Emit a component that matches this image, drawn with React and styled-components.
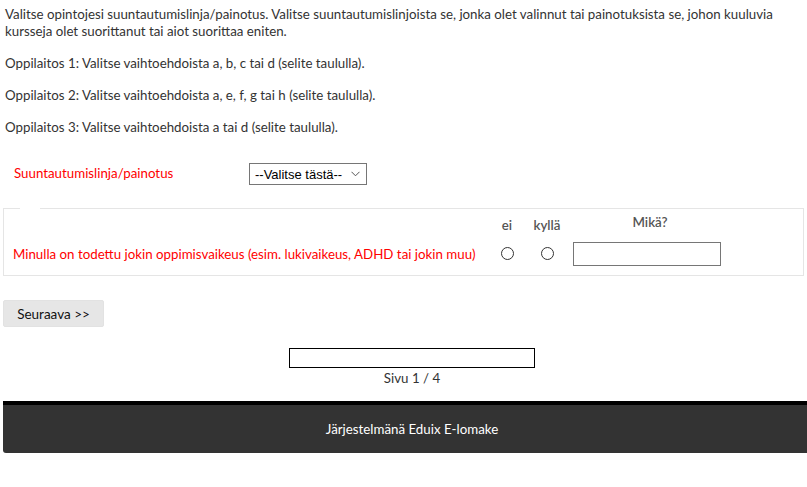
import React from 'react'
import styled, { createGlobalStyle } from 'styled-components'

const GlobalStyle = createGlobalStyle`
    body {
        margin: 0;
        background: #fff;
        font-family: Lato, "Open Sans", sans-serif;
        font-size: 13.3px;
        color: #333;
        overflow: hidden;
    }
`

const Page = styled.div`
    width: 818px;
    margin-left: 3px;
    padding-top: 6px;
`

const Intro = styled.p`
    margin: 0 0 15px 2px;
    max-width: 795px;
    line-height: 17px;
`

const SelectRow = styled.div`
    display: flex;
    align-items: center;
    margin-top: 27px;
    padding-left: 11px;
    height: 22px;
`

const RedLabel = styled.div`
    color: #ff0000;
`

const SelectLabel = styled(RedLabel)`
    width: 235px;
    margin-top: -3px;
`

const SelectWrap = styled.div`
    position: relative;
    width: 118px;
    height: 22px;
`

const Select = styled.select`
    appearance: none;
    width: 100%;
    height: 100%;
    box-sizing: border-box;
    border: 1px solid #767676;
    border-radius: 0;
    background: #fff;
    padding: 0 0 0 5px;
    font-family: "Liberation Sans", Arial, sans-serif;
    font-size: 13px;
    color: #000;
`

const Chevron = styled.svg`
    position: absolute;
    right: 7px;
    top: 8px;
    pointer-events: none;
`

const Fieldset = styled.fieldset`
    margin: 23px 0 0 0;
    width: 801px;
    box-sizing: border-box;
    border: 1px solid #e5e5e5;
    padding: 0 0 9px 9px;
    min-width: 0;
`

const Legend = styled.legend`
    margin-left: 7px;
    padding: 0;
    width: 20px;
    height: 0;
    line-height: 0;
`

const QuestionGrid = styled.div`
    display: grid;
    grid-template-columns: 474px 40px 40px 160px;
    grid-template-rows: 18px 24px;
    row-gap: 8px;
    padding-top: 7px;
    align-items: center;
`

const ColHead = styled.div`
    text-align: center;
    font-weight: 600;
    color: #555;
    padding-left: ${p => p.$offset || 0}px;
    width: ${p => p.$width ? p.$width + 'px' : 'auto'};
    margin-top: ${p => p.$lift ? -6 : 0}px;
`

const Radio = styled.span`
    justify-self: center;
    width: 11px;
    height: 11px;
    border: 1px solid #333;
    border-radius: 50%;
    background: #fff;
    margin-top: -2px;
`

const TextInput = styled.input`
    margin-left: 6px;
    width: 148px;
    height: 24px;
    box-sizing: border-box;
    border: 1px solid #767676;
    padding: 0 4px;
`

const NextButton = styled.button`
    display: block;
    margin-top: 24px;
    width: 101px;
    height: 27px;
    border: 1px solid #e2e2e2;
    border-radius: 2px;
    background: #e6e6e6;
    font-family: Lato, "Open Sans", sans-serif;
    font-size: 13.5px;
    color: #111;
    padding: 0;
`

const Progress = styled.div`
    display: flex;
    flex-direction: column;
    align-items: center;
    margin-top: 21px;
`

const ProgressBar = styled.div`
    width: 246px;
    height: 20px;
    box-sizing: border-box;
    border: 1px solid #000;
`

const PageCount = styled.div`
    margin-top: 2px;
    line-height: 16px;
    color: #333;
`

const Footer = styled.footer`
    margin-top: 15px;
    height: 52px;
    box-sizing: border-box;
    border-top: 4px solid #000;
    background: #333;
    border-radius: 0 0 3px 3px;
    color: #fff;
    display: flex;
    align-items: center;
    justify-content: center;
`

function App() {
    return (
        <>
            <GlobalStyle />
            <Page>
                <Intro>
                    Valitse opintojesi suuntautumislinja/painotus. Valitse suuntautumislinjoista se, jonka olet valinnut tai painotuksista se, johon kuuluvia kursseja olet suorittanut tai aiot suorittaa eniten.
                </Intro>
                <Intro>Oppilaitos 1: Valitse vaihtoehdoista a, b, c tai d (selite taululla).</Intro>
                <Intro>Oppilaitos 2: Valitse vaihtoehdoista a, e, f, g tai h (selite taululla).</Intro>
                <Intro>Oppilaitos 3: Valitse vaihtoehdoista a tai d (selite taululla).</Intro>

                <SelectRow>
                    <SelectLabel>Suuntautumislinja/painotus</SelectLabel>
                    <SelectWrap>
                        <Select defaultValue="">
                            <option value="">--Valitse tästä--</option>
                        </Select>
                        <Chevron width="9" height="6" viewBox="0 0 9 6">
                            <path d="M0.5 0.8 L4.5 4.8 L8.5 0.8" fill="none" stroke="#555" strokeWidth="1" />
                        </Chevron>
                    </SelectWrap>
                </SelectRow>

                <Fieldset>
                    <Legend />
                    <QuestionGrid>
                        <span />
                        <ColHead>ei</ColHead>
                        <ColHead>kyllä</ColHead>
                        <ColHead $offset={6} $width={154} $lift>Mikä?</ColHead>
                        <RedLabel>Minulla on todettu jokin oppimisvaikeus (esim. lukivaikeus, ADHD tai jokin muu)</RedLabel>
                        <Radio />
                        <Radio />
                        <TextInput type="text" />
                    </QuestionGrid>
                </Fieldset>

                <NextButton>Seuraava &gt;&gt;</NextButton>

                <Progress>
                    <ProgressBar />
                    <PageCount>Sivu 1 / 4</PageCount>
                </Progress>

                <Footer>Järjestelmänä Eduix E-lomake</Footer>
            </Page>
        </>
    )
}

export default App
